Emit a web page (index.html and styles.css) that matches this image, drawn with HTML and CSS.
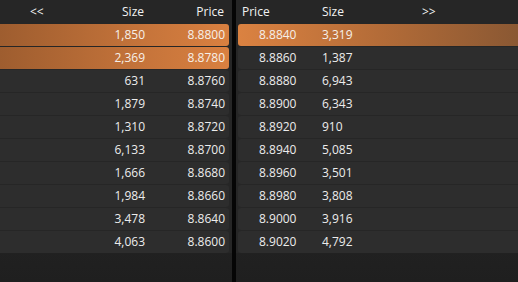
FILE: index.html
```html
<!DOCTYPE html>
<html>
<head>
<meta charset="utf-8">
<link rel="stylesheet" href="styles.css">
</head>
<body>
<div class="book">
  <section class="panel bids">
    <div class="head">
      <span class="nav">&lt;&lt;</span>
      <span class="num">Size</span>
      <span class="num">Price</span>
    </div>
    <div class="rows">
      <div class="row hl"><span></span><span>1,850</span><span>8.8800</span></div>
      <div class="row hl"><span></span><span>2,369</span><span>8.8780</span></div>
      <div class="row"><span></span><span>631</span><span>8.8760</span></div>
      <div class="row"><span></span><span>1,879</span><span>8.8740</span></div>
      <div class="row"><span></span><span>1,310</span><span>8.8720</span></div>
      <div class="row"><span></span><span>6,133</span><span>8.8700</span></div>
      <div class="row"><span></span><span>1,666</span><span>8.8680</span></div>
      <div class="row"><span></span><span>1,984</span><span>8.8660</span></div>
      <div class="row"><span></span><span>3,478</span><span>8.8640</span></div>
      <div class="row"><span></span><span>4,063</span><span>8.8600</span></div>
    </div>
  </section>
  <section class="panel asks">
    <div class="head">
      <span>Price</span>
      <span>Size</span>
      <span class="nav">&gt;&gt;</span>
    </div>
    <div class="rows">
      <div class="row hl"><span>8.8840</span><span>3,319</span></div>
      <div class="row"><span>8.8860</span><span>1,387</span></div>
      <div class="row"><span>8.8880</span><span>6,943</span></div>
      <div class="row"><span>8.8900</span><span>6,343</span></div>
      <div class="row"><span>8.8920</span><span>910</span></div>
      <div class="row"><span>8.8940</span><span>5,085</span></div>
      <div class="row"><span>8.8960</span><span>3,501</span></div>
      <div class="row"><span>8.8980</span><span>3,808</span></div>
      <div class="row"><span>8.9000</span><span>3,916</span></div>
      <div class="row"><span>8.9020</span><span>4,792</span></div>
    </div>
  </section>
</div>
</body>
</html>
```

FILE: styles.css
```css
html, body {
  margin: 0;
  padding: 0;
  background: #050505;
}
body {
  width: 518px;
  height: 282px;
  overflow: hidden;
  font-family: "Open Sans", "Noto Sans", sans-serif;
  font-size: 12px;
  color: #ececec;
}
.book {
  display: flex;
  gap: 4px;
  height: 282px;
}
.panel {
  background: linear-gradient(180deg, #2a2a2a 0%, #262626 60%, #1f1f1f 100%);
  height: 282px;
  display: flex;
  flex-direction: column;
}
.bids { width: 232px; }
.asks { flex: 1; }
.head {
  height: 24px;
  line-height: 23px;
  display: grid;
  background: #262626;
  color: #f2f2f2;
}
.bids .head {
  grid-template-columns: 1fr 80px 80px;
  padding-left: 30px;
  padding-right: 8px;
}
.bids .head .num { text-align: right; }
.asks .head {
  grid-template-columns: 80px 100px 1fr;
  padding-left: 6px;
}
.rows {
  display: flex;
  flex-direction: column;
  gap: 1px;
  background: #262626;
}
.row {
  height: 22px;
  line-height: 22px;
  display: grid;
  background: #2d2d2d;
}
.bids .row {
  grid-template-columns: 1fr 80px 80px;
  margin-right: 3px;
  padding-right: 4px;
  border-radius: 0 3px 3px 0;
}
.bids .row span { text-align: right; }
.asks .row {
  grid-template-columns: 63px 1fr;
  margin-left: 2px;
  padding-left: 21px;
  border-radius: 3px 0 0 3px;
}
.bids .row.hl {
  background: linear-gradient(90deg, #9e5d2f 0%, #c4733a 60%, #d98040 100%);
  color: #f6f0ea;
}
.asks .row.hl {
  background: linear-gradient(90deg, #db8241 0%, #b46c38 50%, #8a5833 100%);
  color: #f6f0ea;
}
```
